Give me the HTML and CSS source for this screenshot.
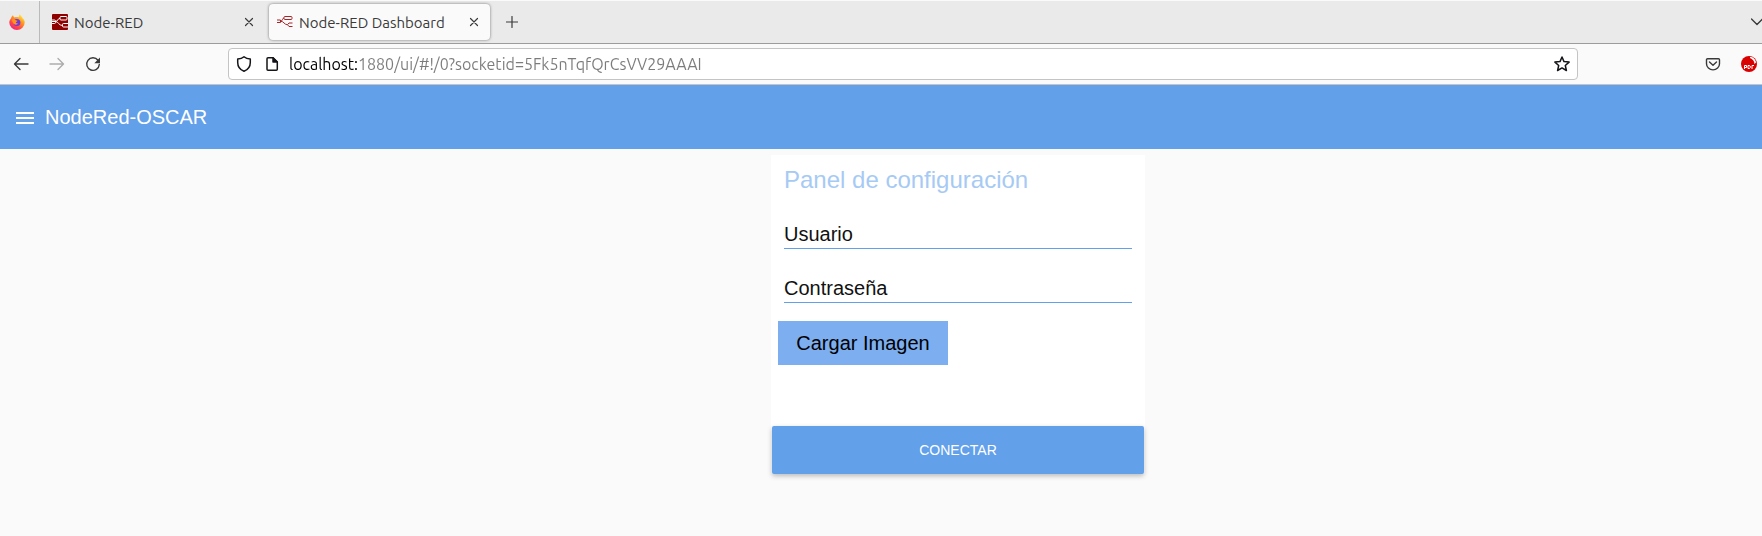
FILE: index.html
```
<!DOCTYPE html>
<html lang="es">
<head>
<meta charset="utf-8">
<title>Node-RED Dashboard</title>
<link rel="stylesheet" href="styles.css">
</head>
<body>
<div class="tabs">
  <button class="pinned" aria-label="Firefox">
    <svg width="16" height="16" viewBox="0 0 16 16">
      <defs>
        <linearGradient id="fx" x1="0.85" y1="0.05" x2="0.2" y2="1">
          <stop offset="0" stop-color="#fff04a"/><stop offset="0.35" stop-color="#ff9a1f"/><stop offset="0.7" stop-color="#ff4548"/><stop offset="1" stop-color="#e81c8c"/>
        </linearGradient>
      </defs>
      <path fill="url(#fx)" d="M15.6 7.2c-.3-1.3-1-2.3-2-3C13.100 3 12 1.800 10.800.200 10 1.200 9.700 2.300 9.800 3.300c-1.500-.5-3-.4-4.200.1C4.700 3 4.200 2 4.100 1.200 3 2 2.400 2.900 2.100 4.200 1.100 5.300.300 6.800.300 8.600a7.700 7.400 0 0 0 15.400 0c0-.5 0-1-.1-1.400z"/>
      <circle cx="7.900" cy="8.400" r="3.500" fill="#7139d8"/>
      <path fill="#ff9420" d="M3 5.800c1.500-.8 3-.4 3.800.5l1.700.4c-.1 1-1.400 1-1.600 1.600-.1 1 1.200 1.500 2.500 1-1 1.800-4.300 2-5.400-.6C3.500 7.600 3 7 3 5.800z"/>
    </svg>
  </button>
  <div class="tab">
    <svg width="16" height="16" viewBox="0 0 16 16">
      <rect width="16" height="16" rx="1" fill="#8f0000"/>
      <g fill="none" stroke="#fff"><rect x="8" y="2.500" width="7" height="3.500" rx="1"/><path d="M0 7.500h3.500C6 7.500 5.500 4.300 8 4.300M3.500 7.500c3 0 3 4 7 4M16 9.500h-4.500a1 1 0 0 0-1 1v1.500a1 1 0 0 0 1 1H16M0 6h2.500a1 1 0 0 1 1 1v1.500a1 1 0 0 1-1 1H0"/></g>
    </svg>
    <span class="tab-name">Node-RED</span>
    <button class="icon-button" aria-label="Cerrar Node-RED"><svg width="10" height="10" viewBox="0 0 10 10" class="line"><path d="M1.500 1.500l7 7M8.500 1.500l-7 7"/></svg></button>
  </div>
  <div class="tab active">
    <svg width="16" height="16" viewBox="0 0 16 16">
      <g fill="none" stroke="#a5262a"><rect x="7" y="2.500" width="8" height="3" rx="1"/><path d="M0 6h3.500v2.500H0M3.500 7.200C6 7.200 5 4 7 4M3.500 7.200c3.500 0 3.500 3.500 7 3.500M15.500 9H12l-1.500 1.700L12 12.500h3.500"/></g>
    </svg>
    <span class="tab-name">Node-RED Dashboard</span>
    <button class="icon-button" aria-label="Cerrar Node-RED Dashboard"><svg width="10" height="10" viewBox="0 0 10 10" class="line"><path d="M1.500 1.500l7 7M8.500 1.500l-7 7"/></svg></button>
  </div>
  <button class="icon-button new-tab" aria-label="Nueva pestaña"><svg width="12" height="12" viewBox="0 0 12 12" class="line"><path d="M6 .500v11M.500 6h11"/></svg></button>
  <button class="icon-button all-tabs" aria-label="Todas las pestañas"><svg width="12" height="8" viewBox="0 0 12 8" class="line"><path stroke-width="1.400" d="M.500 1L6 6.500 11.500 1"/></svg></button>
</div>
<div class="toolbar">
  <div class="nav">
    <button class="icon-button" aria-label="Atrás"><svg width="16" height="16" viewBox="0 0 16 16" class="line bold"><path d="M15 8H1.800M7 2.500L1.500 8 7 13.500"/></svg></button>
    <button class="icon-button" aria-label="Adelante" disabled><svg width="16" height="16" viewBox="0 0 16 16" class="line bold"><path d="M1 8h13.200M9 2.500L14.500 8 9 13.500"/></svg></button>
    <button class="icon-button" aria-label="Recargar"><svg width="16" height="16" viewBox="0 0 16 16" class="line bold"><path d="M13 4.200A6.300 6.300 0 1 0 14.300 8.500"/><path fill="#3a3a3a" stroke="none" d="M15 1.500v5.300a.500.500 0 0 1-.5.500H9.300z"/></svg></button>
  </div>
  <div class="address">
    <svg width="16" height="16" viewBox="0 0 16 16" class="line dark"><path d="M8 .800C9.600 2.200 11.800 2.900 14.300 3v3.500c0 4-2.500 7.300-6.300 8.800C4.200 13.800 1.700 10.500 1.700 6.500V3C4.200 2.900 6.400 2.200 8 .800z"/></svg>
    <svg width="16" height="16" viewBox="0 0 16 16" class="line dark"><path d="M4 1.700h5L13.300 6v7.300a1 1 0 0 1-1 1H4a1 1 0 0 1-1-1V2.700a1 1 0 0 1 1-1z"/><path fill="#15141a" d="M9 1.700V6h4.300z"/></svg>
    <input class="url" type="text" aria-label="Dirección" value="localhost:1880/ui/#!/0?socketid=5Fk5nTqfQrCsVV29AAAI" spellcheck="false">
    <button class="icon-button" aria-label="Guardar en marcadores"><svg width="16" height="16" viewBox="0 0 16 16" class="line dark"><path d="M8 1l2 4.600 5.100.5-3.800 3.400 1.100 5L8 11.900l-4.400 2.600 1.100-5L.900 6.100 6 5.600z"/></svg></button>
  </div>
  <div class="extras">
    <button class="icon-button" aria-label="Pocket"><svg width="16" height="16" viewBox="0 0 16 16" class="line bold"><path d="M2.500 2.700h11a1 1 0 0 1 1 1v4a6.500 6.200 0 0 1-13 0v-4a1 1 0 0 1 1-1zM4.500 6L8 9.300 11.500 6"/></svg></button>
    <button class="icon-button" aria-label="PDF">
      <svg width="16" height="16" viewBox="0 0 16 16">
        <circle cx="8" cy="8" r="8" fill="#d90000"/><path fill="#fff" d="M9 1c3 0 5.500 2 6 5.500L13.500 8C13.500 5 11.500 3 9 2z"/>
        <path fill="none" stroke="#fff" d="M3.500 13V9.500h2v2h-2M7 9.500v3h1.500l.7-.7V10l-.7-.5zM11 13V9.500h2"/>
      </svg>
    </button>
  </div>
</div>
<header class="app-bar">
  <button class="icon-button" aria-label="Menú"><svg width="18" height="14" viewBox="0 0 18 14" fill="#fff"><path d="M0 2h18v2H0zM0 7h18v2H0zM0 12h18v2H0z"/></svg></button>
  <h1 class="app-title">NodeRed-OSCAR</h1>
</header>
<main class="content">
  <form class="card">
    <h2 class="card-title">Panel de configuración</h2>
    <input class="field" type="text" placeholder="Usuario" aria-label="Usuario">
    <input class="field" type="password" placeholder="Contraseña" aria-label="Contraseña">
    <button class="upload" type="button">Cargar Imagen</button>
    <button class="submit" type="button">CONECTAR</button>
  </form>
</main>
</body>
</html>
```
FILE: styles.css
```
* { box-sizing: border-box; }

body {
  margin: 0;
  min-height: 100vh;
  background: #fafafa;
  font-family: "Liberation Sans", Arial, sans-serif;
  overflow-x: hidden;
}

svg { display: block; flex: none; }

button { font-family: inherit; border: 0; cursor: pointer; }

.icon-button {
  flex: none;
  padding: 0;
  background: none;
}

.icon-button:disabled { opacity: 0.4; }

.line { fill: none; stroke: #3a3a3a; stroke-width: 1.2; stroke-linecap: round; stroke-linejoin: round; }
.line.bold { stroke-width: 1.4; }
.line.dark { stroke: #15141a; stroke-width: 1.5; }

/* Browser tabs */
.tabs {
  display: flex;
  align-items: center;
  height: 44px;
  background: #eaeaea;
  border-top: 1px solid #fafafa;
  border-bottom: 1px solid #9c9c9c;
  font-family: Ubuntu, "Noto Sans", sans-serif;
  font-size: 15px;
  color: #3a3a3a;
}

.pinned {
  align-self: stretch;
  display: flex;
  align-items: center;
  width: 40px;
  padding: 0 0 0 9px;
  background: none;
  border-right: 1px solid #bababa;
}

.tab {
  display: flex;
  align-items: center;
  gap: 6px;
  width: 221px;
  height: 36px;
  margin-left: 4px;
  padding: 0 11px 0 8px;
  border-radius: 4px;
}

.tab.active {
  background: #fafafa;
  box-shadow: 0 0 3px rgba(0, 0, 0, 0.5);
}

.tab-name { flex: 1; white-space: nowrap; }

.new-tab { margin-left: 16px; }

.all-tabs { margin: 0 -1px 0 auto; }

/* Navigation toolbar */
.toolbar {
  display: flex;
  align-items: center;
  height: 41px;
  padding: 0 5px 0 13px;
  border-bottom: 1px solid #c4c4c4;
}

.nav { display: flex; gap: 20px; width: 215px; }

.address {
  flex: 1;
  display: flex;
  align-items: center;
  gap: 12px;
  height: 32px;
  padding: 0 7px;
  background: #fff;
  border: 1px solid #c4c4c4;
  border-radius: 4px;
}

.url {
  flex: 1;
  min-width: 0;
  margin-left: -3px;
  padding: 0;
  border: 0;
  outline: 0;
  font: 16px Ubuntu, "Noto Sans", sans-serif;
  color: transparent;
  background: linear-gradient(90deg, #000 69px, #7b7b7b 69px);
  background-clip: text;
  -webkit-background-clip: text;
}

.extras {
  display: flex;
  justify-content: flex-end;
  gap: 20px;
  width: 179px;
}

/* Dashboard */
.app-bar {
  display: flex;
  align-items: center;
  gap: 11px;
  height: 64px;
  padding: 0 16px;
  background: #62a0ea;
}

.app-title {
  margin: 0;
  font-size: 20px;
  font-weight: 400;
  color: #fff;
}

.content {
  display: flex;
  justify-content: center;
  padding: 6px 0 0 154px;
}

.card {
  display: flex;
  flex-direction: column;
  width: 374px;
  background: #fff;
}

.card-title {
  margin: 0 13px 18px;
  padding-top: 10px;
  font-size: 24px;
  line-height: 30px;
  font-weight: 400;
  color: #a6caf4;
}

.field {
  height: 36px;
  margin: 0 13px 18px;
  padding: 8px 0 0;
  border: 0;
  border-bottom: 1px solid #62a0ea;
  outline: 0;
  background: none;
  font: 20px "Liberation Sans", Arial, sans-serif;
}

.field::placeholder { color: #111; opacity: 1; }

.upload {
  align-self: flex-start;
  min-width: 170px;
  height: 44px;
  margin-left: 7px;
  padding: 0 18px;
  background: #7caef0;
  font-size: 20px;
  color: #000;
}

.submit {
  height: 48px;
  margin: 61px 1px 0;
  border-radius: 2px;
  background: #62a0ea;
  box-shadow: 0 2px 5px rgba(0, 0, 0, 0.26);
  font-size: 14px;
  color: #fff;
}
```
